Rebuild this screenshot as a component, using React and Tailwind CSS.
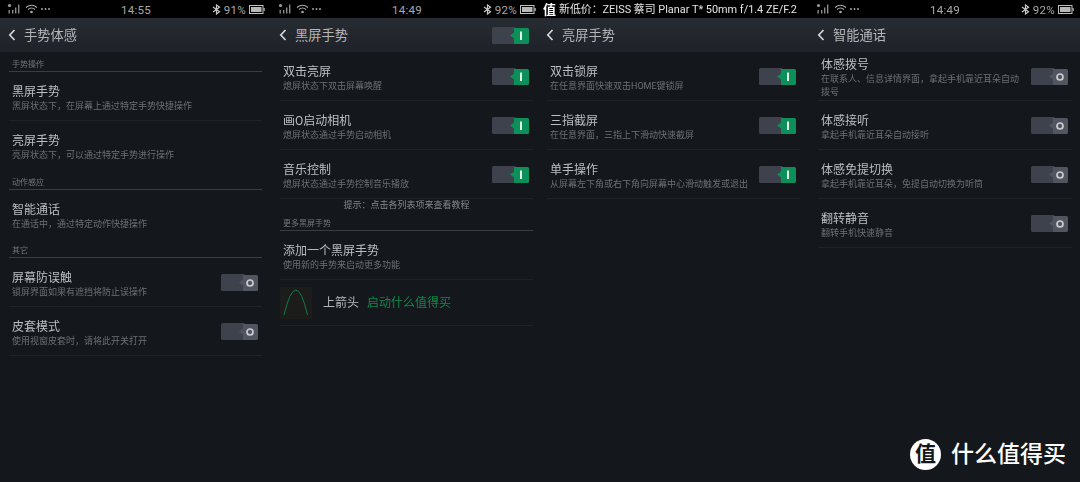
import React from "react";

const FONT = "font-['Roboto','Noto_Sans_CJK_SC',sans-serif]";

function Back() {
  return (
    <svg width="8" height="12" viewBox="0 0 8 12" className="shrink-0">
      <path d="M6.5 1 L1.8 6 L6.5 11" fill="none" stroke="#d4d6d8" strokeWidth="1.7" />
    </svg>
  );
}

function Signal() {
  return (
    <svg width="46" height="12" viewBox="0 0 46 12" className="shrink-0">
      <circle cx="2.5" cy="2.5" r="1.6" fill="#9a9a9a" />
      <rect x="1.5" y="7" width="1.4" height="3.5" fill="#8a8a8a" />
      <rect x="5" y="7" width="1.4" height="3.5" fill="#8a8a8a" />
      <rect x="8" y="4.5" width="1.4" height="6" fill="#8a8a8a" />
      <rect x="11" y="1.5" width="1.4" height="9" fill="#8a8a8a" />
      <path d="M19 4.5 Q24.5 0 30 4.5" fill="none" stroke="#a8a8a8" strokeWidth="1.2" />
      <path d="M21 6.5 Q24.5 3.5 28 6.5" fill="none" stroke="#a8a8a8" strokeWidth="1.2" />
      <circle cx="24.5" cy="9" r="1.3" fill="#a8a8a8" />
      <circle cx="35" cy="6" r="0.9" fill="#b0b0b0" />
      <circle cx="38.5" cy="6" r="0.9" fill="#b0b0b0" />
      <circle cx="42" cy="6" r="0.9" fill="#b0b0b0" />
    </svg>
  );
}

function Bluetooth() {
  return (
    <svg width="9" height="11" viewBox="0 0 9 11" className="shrink-0">
      <path d="M1 3 L7.5 7.8 L4.5 10 V1 L7.5 3.2 L1 8" fill="none" stroke="#c8c8c8" strokeWidth="1.2" />
    </svg>
  );
}

function Battery() {
  return (
    <svg width="16" height="9" viewBox="0 0 16 9" className="shrink-0">
      <rect x="0.5" y="0.5" width="13.5" height="8" fill="none" stroke="#c0c0c0" />
      <rect x="2" y="2" width="10.5" height="5" fill="#b8b8b8" />
      <rect x="14.5" y="3" width="1.2" height="3" fill="#c0c0c0" />
    </svg>
  );
}

function Status({ time, pct, offset, gapRight }) {
  return (
    <div className={`h-[18px] bg-black grid grid-cols-3 items-center ${offset} ${gapRight}`}>
      <Signal />
      <span className="text-[11.5px] pt-[3px] text-[#a8a8a8] tracking-[0.3px] leading-none text-center">{time}</span>
      <div className="flex items-center justify-end gap-[3px]">
        <Bluetooth />
        <span className="text-[11.5px] pt-[3px] text-[#a8a8a8] tracking-[0.3px] leading-none">{pct}</span>
        <Battery />
      </div>
    </div>
  );
}

function Toggle({ on }) {
  const fill = on ? "#0c8f58" : "#50555f";
  return (
    <svg width="37" height="17" viewBox="0 0 37 17" className="shrink-0">
      <rect x="0" y="0" width="24" height="17" rx="1.5" fill="#3d424c" />
      <path d="M22 1 H35.5 Q37 1 37 2.5 V15.5 Q37 17 35.5 17 H22 V11.5 L18 8.5 L22 5.5 Z" fill={fill} />
      {on ? (
        <rect x="28" y="4.5" width="2" height="8.5" fill="#dff2e8" />
      ) : (
        <circle cx="29" cy="9" r="3" fill="none" stroke="#c9ccd0" strokeWidth="1.7" />
      )}
    </svg>
  );
}

function TitleBar({ title, pl, pr, toggle }) {
  return (
    <div className={`h-[34px] bg-gradient-to-b from-[#272c33] to-[#1e2228] flex items-center justify-between ${pl} ${pr}`}>
      <div className="flex items-center gap-[8px]">
        <Back />
        <span className="text-[13.25px] pt-[2px] leading-none text-[#b4b7ba]">{title}</span>
      </div>
      {toggle && <Toggle on />}
    </div>
  );
}

function Section({ label, hClass = "h-[20px]" }) {
  return (
    <div className={`${hClass} flex items-end border-b border-[#3a3e44] pb-[1px]`}>
      <span className="text-[8px] leading-[10px] text-[#73777c] pl-[3px]">{label}</span>
    </div>
  );
}

function Row({ title, sub, toggle, last, height = "h-[49px]", nowrap }) {
  return (
    <div className={`${height} flex items-center justify-between pl-[3px] ${last ? "" : "border-b border-[#1f2328]"}`}>
      <div className="flex flex-col pt-[4px] min-w-0">
        <span className="text-[12px] leading-[16px] text-[#bcbfc2]">{title}</span>
        <span className={`text-[9px] leading-[13px] text-[#6c7075] ${nowrap ? "whitespace-nowrap" : "w-[205px]"}`}>{sub}</span>
      </div>
      {toggle}
    </div>
  );
}

const RowToggle = ({ on }) => (
  <div className="mr-[4px]">
    <Toggle on={on} />
  </div>
);

function Panel1() {
  return (
    <div className="w-[270px] shrink-0">
      <Status time="14:55" pct="91%" offset="pl-[7px]" gapRight="pr-[5px]" />
      <TitleBar title="手势体感" pl="pl-[8px]" pr="pr-[8px]" />
      <div className="pl-[9px] pr-[8px]">
        <Section label="手势操作" />
        <Row title="黑屏手势" sub="黑屏状态下，在屏幕上通过特定手势快捷操作" />
        <Row title="亮屏手势" sub="亮屏状态下，可以通过特定手势进行操作" last />
        <Section label="动作感应" />
        <Row title="智能通话" sub="在通话中，通过特定动作快捷操作" last />
        <Section label="其它" hClass="h-[19px]" />
        <Row title="屏幕防误触" sub="锁屏界面如果有遮挡将防止误操作" toggle={<RowToggle />} />
        <Row title="皮套模式" sub="使用视窗皮套时，请将此开关打开" toggle={<RowToggle />} />
      </div>
    </div>
  );
}

function Panel2() {
  return (
    <div className="w-[270px] shrink-0">
      <Status time="14:49" pct="92%" offset="pl-[8px]" gapRight="pr-[4px]" />
      <TitleBar title="黑屏手势" pl="pl-[9px]" pr="pr-[11px]" toggle />
      <div className="pl-[10px] pr-[7px]">
        <Row title="双击亮屏" sub="熄屏状态下双击屏幕唤醒" toggle={<RowToggle on />} />
        <Row title="画O启动相机" sub="熄屏状态通过手势启动相机" toggle={<RowToggle on />} />
        <Row title="音乐控制" sub="熄屏状态通过手势控制音乐播放" toggle={<RowToggle on />} />
        <div className="h-[13px] flex items-center justify-center text-[9px] text-[#85898d] leading-none">提示：点击各列表项来查看教程</div>
        <Section label="更多黑屏手势" hClass="h-[19px]" />
        <Row title="添加一个黑屏手势" sub="使用新的手势来启动更多功能" />
        <div className="h-[46px] flex items-center border-b border-[#1f2328]">
          <div className="w-[32px] h-[32px] bg-[#1c1c1a] rounded-[1px] shrink-0">
            <svg width="32" height="32" viewBox="0 0 32 32">
              <path d="M4 28 Q16 -22 27.5 28" fill="none" stroke="#0e7a4a" strokeWidth="1" />
            </svg>
          </div>
          <span className="ml-[11px] text-[12px] leading-none text-[#b4b7ba]">上箭头</span>
          <span className="ml-[8px] text-[12px] leading-none text-[#0f8a4a]">启动什么值得买</span>
        </div>
      </div>
    </div>
  );
}

function Panel3() {
  return (
    <div className="w-[270px] shrink-0">
      <div className="h-[18px] bg-black flex items-center pl-[3px] text-white">
        <span className="text-[13px] font-bold leading-none w-[16px]">值</span>
        <span className="text-[10.9px] pt-[3px] leading-none whitespace-nowrap text-[#e4e4e4]">新低价：ZEISS 蔡司 Planar T* 50mm f/1.4 ZE/F.2</span>
      </div>
      <TitleBar title="亮屏手势" pl="pl-[6px]" pr="pr-[14px]" />
      <div className="pl-[7px] pr-[10px]">
        <Row title="双击锁屏" sub="在任意界面快速双击HOME键锁屏" toggle={<RowToggle on />} />
        <Row title="三指截屏" sub="在任意界面，三指上下滑动快速截屏" toggle={<RowToggle on />} />
        <Row title="单手操作" sub="从屏幕左下角或右下角向屏幕中心滑动触发或退出" toggle={<RowToggle on />} nowrap />
      </div>
    </div>
  );
}

function Panel4() {
  return (
    <div className="w-[270px] shrink-0">
      <Status time="14:49" pct="92%" offset="pl-[6px]" gapRight="pr-[6px]" />
      <TitleBar title="智能通话" pl="pl-[7px]" pr="pr-[12px]" />
      <div className="pl-[8px] pr-[8px]">
        <Row title="体感拨号" sub="在联系人、信息详情界面，拿起手机靠近耳朵自动拨号" toggle={<RowToggle />} />
        <Row title="体感接听" sub="拿起手机靠近耳朵自动接听" toggle={<RowToggle />} />
        <Row title="体感免提切换" sub="拿起手机靠近耳朵，免提自动切换为听筒" toggle={<RowToggle />} />
        <Row title="翻转静音" sub="翻转手机快速静音" toggle={<RowToggle />} />
      </div>
    </div>
  );
}

export default function App() {
  return (
    <div className={`relative w-[1080px] h-[482px] overflow-hidden bg-[#14171c] ${FONT}`}>
      <div className="flex blur-[0.3px]">
        <Panel1 />
        <Panel2 />
        <Panel3 />
        <Panel4 />
      </div>
      <div className="absolute left-[910px] top-[439px] flex items-center gap-[10px]">
        <div className="w-[31px] h-[31px] rounded-full bg-white flex items-center justify-center text-[21px] leading-none font-bold text-[#14171c]">值</div>
        <span className="text-[23px] leading-none text-white font-medium">什么值得买</span>
      </div>
    </div>
  );
}
